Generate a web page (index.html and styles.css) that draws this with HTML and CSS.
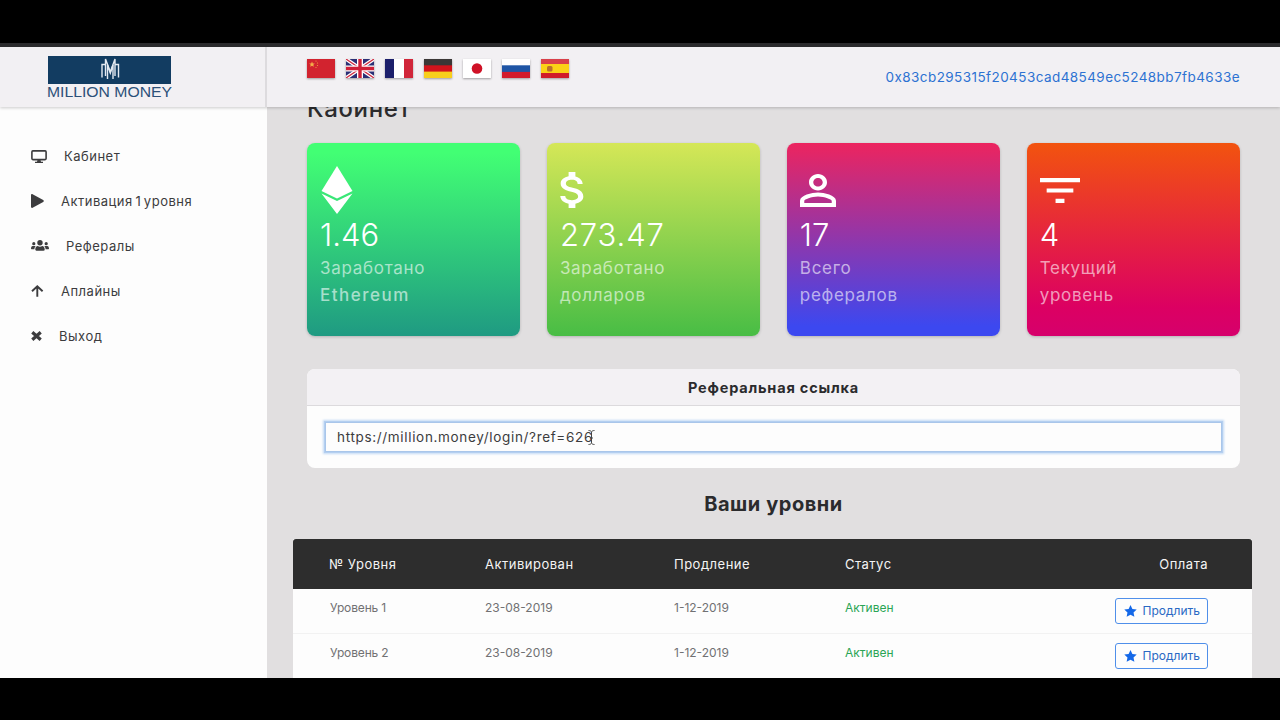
FILE: index.html
```
<!DOCTYPE html>
<html lang="ru">
  <head>
    <meta charset="UTF-8" />
    <meta name="viewport" content="width=device-width, initial-scale=1" />

    <title>Million Money</title>

    <link rel="stylesheet" href="styles.css">
  </head>

  <body>

    <!-- shared icons -->
    <svg class="defs" width="0" height="0">
      <symbol id="star" viewBox="0 0 24 23">
        <path d="M12 0l3.6 7.6 8.3 1.1-6.1 5.7 1.6 8.3L12 18.7l-7.4 4 1.6-8.3L.1 8.7l8.3-1.1z" />
      </symbol>
    </svg>

    <div class="screen">

      <header class="topbar">
        <a class="brand">
          <svg width="126" height="44" viewBox="0 0 126 44">
            <rect x="1" y="1" width="123" height="28" fill="#123c61" />
            <g fill="none" stroke="#e4eaf2" stroke-width="1.400">
              <path d="M55 22.500V9.500h3.500M71.500 22.500V9.500H68" />
              <path d="M58.500 21V4l4.800 13L68 4v17" />
              <path d="M60.500 24V10l2.800 8L66 10v14" />
            </g>
            <text x="0" y="41.500" textLength="125" lengthAdjust="spacingAndGlyphs">MILLION MONEY</text>
          </svg>
        </a>

        <div class="topbar-main">
          <div class="flags">
            <svg class="flag" viewBox="0 0 28 19" preserveAspectRatio="none">
              <rect width="28" height="19" fill="#d2232f" />
              <path d="M5 2.500l.8 1.900 2 .1-1.500 1.300.5 2L5 6.700 3.200 7.800l.5-2L2.200 4.500l2-.1z" fill="#f5b04a" />
              <g fill="#f0a040"><circle cx="9" cy="2" r=".6" /><circle cx="10.500" cy="4" r=".6" /><circle cx="10.500" cy="6.500" r=".6" /><circle cx="9" cy="8.500" r=".6" /></g>
            </svg>
            <svg class="flag" viewBox="0 0 28 19" preserveAspectRatio="none">
              <rect width="28" height="19" fill="#2b2f75" />
              <path d="M0 0l28 19M28 0L0 19" stroke="#fff" stroke-width="3.800" />
              <path d="M0 0l28 19M28 0L0 19" stroke="#cf2b41" stroke-width="1.300" />
              <path d="M14 0v19M0 9.500h28" stroke="#fff" stroke-width="6" />
              <path d="M14 0v19M0 9.500h28" stroke="#cf2038" stroke-width="3.400" />
            </svg>
            <svg class="flag" viewBox="0 0 28 19" preserveAspectRatio="none">
              <rect width="28" height="19" fill="#fff" />
              <rect width="9" height="19" fill="#1c1f6b" />
              <rect x="19" width="9" height="19" fill="#d1263a" />
            </svg>
            <svg class="flag" viewBox="0 0 28 19" preserveAspectRatio="none">
              <rect width="28" height="19" fill="#f8cf1c" />
              <rect width="28" height="12.600" fill="#d2141c" />
              <rect width="28" height="6.300" fill="#3b3736" />
            </svg>
            <svg class="flag" viewBox="0 0 28 19" preserveAspectRatio="none">
              <rect width="28" height="19" fill="#fff" />
              <circle cx="14" cy="9.500" r="5.300" fill="#cf1126" />
            </svg>
            <svg class="flag" viewBox="0 0 28 19" preserveAspectRatio="none">
              <rect width="28" height="19" fill="#fff" />
              <rect y="6.300" width="28" height="12.700" fill="#1f55a5" />
              <rect y="12.900" width="28" height="6.100" fill="#d21a2b" />
            </svg>
            <svg class="flag" viewBox="0 0 28 19" preserveAspectRatio="none">
              <rect width="28" height="19" fill="#fbd116" />
              <rect width="28" height="5" fill="#d9404a" />
              <rect y="14" width="28" height="5" fill="#d01c2a" />
              <rect x="6" y="7" width="5.500" height="5.500" rx="1.500" fill="#b9702c" />
            </svg>
          </div>

          <a class="wallet">0x83cb295315f20453cad48549ec5248bb7fb4633e</a>
        </div>
      </header>

      <div class="page">

        <nav class="sidebar">
          <a class="nav-item">
            <svg width="16" height="13" viewBox="0 0 16 13">
              <rect x=".9" y=".9" width="14.200" height="8.700" rx="1" fill="none" stroke="currentColor" stroke-width="1.600" />
              <path d="M6.500 10h3l.5 1.700h2V13H4v-1.300h2z" fill="currentColor" />
            </svg>
            <span>Кабинет</span>
          </a>
          <a class="nav-item">
            <svg width="13" height="14" viewBox="0 0 13 14">
              <path d="M0 1.200C0 .3.800-.2 1.600.3l10.600 5.600c.8.500.8 1.500 0 2L1.600 13.700C.8 14.200 0 13.700 0 12.800z" fill="currentColor" />
            </svg>
            <span>Активация 1 уровня</span>
          </a>
          <a class="nav-item">
            <svg width="18" height="11" viewBox="0 0 18 11">
              <g fill="currentColor">
                <circle cx="9" cy="2.700" r="2.700" />
                <circle cx="2.800" cy="3.700" r="1.600" />
                <circle cx="15.200" cy="3.700" r="1.600" />
                <path d="M4.300 9.500c0-2.300 1-3.500 2.500-3.500 1.200.9 3.200.9 4.400 0 1.500 0 2.500 1.200 2.500 3.500 0 .8-.4 1.200-1.100 1.200H5.400c-.7 0-1.100-.4-1.100-1.200z" />
                <path d="M0 8.800C0 7 .6 5.900 1.700 5.900h2.200c.3 0 .6.100.8.200C3.800 6.900 3.500 8 3.400 9.200H.6C.2 9.200 0 9.100 0 8.800zM18 8.800c0-1.800-.6-2.900-1.700-2.900h-2.200c-.3 0-.6.100-.8.200.9.800 1.200 1.900 1.300 3.100h2.800c.4 0 .6-.1.600-.4z" />
              </g>
            </svg>
            <span>Рефералы</span>
          </a>
          <a class="nav-item">
            <svg width="13" height="12" viewBox="0 0 13 12">
              <path d="M6.300 11.800V1.500M1 6.300l5.300-5 5.300 5" fill="none" stroke="currentColor" stroke-width="1.900" />
            </svg>
            <span>Аплайны</span>
          </a>
          <a class="nav-item">
            <svg width="11" height="10" viewBox="0 0 11 10">
              <path d="M1.300 1.200l8.400 7.600M9.700 1.200L1.300 8.800" fill="none" stroke="currentColor" stroke-width="3.200" />
            </svg>
            <span>Выход</span>
          </a>
        </nav>

        <main class="content">
          <h1 class="title">Кабинет</h1>

          <div class="cards">
            <div class="card card-eth">
              <div class="card-icon">
                <svg class="eth-icon" width="32" height="48" viewBox="0 0 32 48" fill="#fff">
                  <path d="M16 0l15.500 25L16 32.500.5 25z" />
                  <path d="M.5 27.500L16 35l15.500-7.500L16 48z" />
                </svg>
              </div>
              <div class="card-value">1.46</div>
              <div class="card-label">Заработано<br><b>Ethereum</b></div>
            </div>

            <div class="card card-usd">
              <div class="card-icon">
                <svg width="24" height="36" viewBox="6.200 3 10.600 18" preserveAspectRatio="none" fill="#fff">
                  <path d="M11.800 10.900c-2.270-.59-3-1.200-3-2.150 0-1.090 1.010-1.850 2.700-1.850 1.780 0 2.440.85 2.500 2.100h2.210c-.07-1.720-1.120-3.300-3.210-3.810V3h-3v2.160c-1.940.42-3.500 1.680-3.500 3.610 0 2.310 1.910 3.460 4.700 4.130 2.500.6 3 1.480 3 2.410 0 .69-.49 1.790-2.700 1.790-2.060 0-2.870-.92-2.980-2.100h-2.200c.12 2.190 1.760 3.420 3.680 3.830V21h3v-2.150c1.950-.37 3.500-1.500 3.500-3.550 0-2.840-2.430-3.810-4.700-4.400z" />
                </svg>
              </div>
              <div class="card-value">273.47</div>
              <div class="card-label">Заработано<br>долларов</div>
            </div>

            <div class="card card-ref">
              <div class="card-icon">
                <svg width="36" height="33" viewBox="4 4 16 16" preserveAspectRatio="none" fill="#fff">
                  <path d="M12 5.900c1.160 0 2.100.94 2.100 2.100s-.94 2.100-2.100 2.100S9.900 9.160 9.900 8s.94-2.100 2.100-2.100m0 9c2.970 0 6.100 1.460 6.100 2.100v1.100H5.900V17c0-.64 3.130-2.100 6.100-2.100M12 4C9.790 4 8 5.790 8 8s1.790 4 4 4 4-1.790 4-4-1.790-4-4-4zm0 9c-2.670 0-8 1.340-8 4v3h16v-3c0-2.660-5.330-4-8-4z" />
                </svg>
              </div>
              <div class="card-value">17</div>
              <div class="card-label">Всего<br>рефералов</div>
            </div>

            <div class="card card-level">
              <div class="card-icon">
                <svg width="40" height="25" viewBox="3 6 18 12" preserveAspectRatio="none" fill="#fff">
                  <path d="M10 18h4v-2h-4v2zM3 6v2h18V6H3zm3 7h12v-2H6v2z" />
                </svg>
              </div>
              <div class="card-value">4</div>
              <div class="card-label">Текущий<br>уровень</div>
            </div>
          </div>

          <section class="ref-box">
            <h2 class="ref-head">Реферальная ссылка</h2>
            <div class="ref-body">
              <input class="ref-input" type="text" value="https://million.money/login/?ref=626" />
              <svg class="caret" width="7" height="15" viewBox="0 0 7 15">
                <path d="M.5.500c1.500 0 3 .5 3 2v10c0 1.500-1.500 2-3 2M6.500.500c-1.500 0-3 .5-3 2v10c0 1.500 1.500 2 3 2M2 8h3" fill="none" stroke="#444" />
              </svg>
            </div>
          </section>

          <h2 class="levels-title">Ваши уровни</h2>

          <table class="levels">
            <thead>
              <tr>
                <th class="col-level">№ Уровня</th>
                <th class="col-start">Активирован</th>
                <th class="col-end">Продление</th>
                <th class="col-status">Статус</th>
                <th class="col-pay">Оплата</th>
              </tr>
            </thead>
            <tbody>
              <tr>
                <td class="col-level">Уровень 1</td>
                <td>23-08-2019</td>
                <td>1-12-2019</td>
                <td class="active">Активен</td>
                <td class="col-pay"><button class="btn"><svg width="13" height="12"><use href="#star" /></svg>Продлить</button></td>
              </tr>
              <tr>
                <td class="col-level">Уровень 2</td>
                <td>23-08-2019</td>
                <td>1-12-2019</td>
                <td class="active">Активен</td>
                <td class="col-pay"><button class="btn"><svg width="13" height="12"><use href="#star" /></svg>Продлить</button></td>
              </tr>
            </tbody>
          </table>
        </main>

      </div>
    </div>
  </body>
</html>
```

FILE: styles.css
```
*{
  box-sizing: border-box;
}

body{
  margin: 0;
  padding-top: 43px;
  height: 720px;
  overflow: hidden;
  background: #000000;
  font-family: Inter, "Liberation Sans", sans-serif;
  color: #3c3c3e;
}

.defs{
  display: block;
}

.screen{
  display: flex;
  flex-direction: column;
  height: 635px;
  overflow: hidden;
  border-top: 4px solid #2b2b2d;
  background: #e1dfe0;
}

/* top bar */

.topbar{
  position: relative;
  z-index: 1;
  display: flex;
  flex: none;
  height: 60px;
  background: #f2f0f3;
  box-shadow: 0 1px 3px rgba(0, 0, 0, .2);
}

.brand{
  width: 267px;
  padding: 8px 0 0 47px;
  border-right: 2px solid #dddbde;
}

.brand text{
  font-family: "Liberation Sans", sans-serif;
  font-size: 15.5px;
  fill: #2c5079;
}

.topbar-main{
  flex: 1;
  display: flex;
  justify-content: space-between;
  padding: 12px 40px 0;
}

.flags{
  display: flex;
  gap: 11px;
}

.flag{
  width: 28px;
  height: 19px;
  box-shadow: 0 1px 2px rgba(0, 0, 0, .35);
}

.wallet{
  padding-top: 9px;
  font-size: 13.5px;
  line-height: 18px;
  letter-spacing: .43px;
  color: #2d72d2;
}

/* layout */

.page{
  flex: 1;
  display: flex;
  min-height: 0;
}

.sidebar{
  flex: none;
  width: 267px;
  padding: 27px 0 0 31px;
  background: #fdfdfd;
}

.nav-item{
  display: flex;
  align-items: center;
  gap: 17px;
  height: 44.8px;
  font-size: 13px;
  letter-spacing: .5px;
  word-spacing: -1.5px;
}

.content{
  flex: 1;
  min-width: 0;
  padding: 0 40px;
}

.title{
  margin: -12px 0 20px;
  font-size: 24px;
  font-weight: 500;
  line-height: 28px;
  letter-spacing: .7px;
  color: #2b2b2d;
}

/* cards */

.cards{
  display: grid;
  grid-template-columns: repeat(4, 1fr);
  gap: 26.670px;
}

.card{
  height: 193px;
  padding: 23px 13px 0;
  border-radius: 8px;
  color: #ffffff;
  box-shadow: 0 1px 3px rgba(0, 0, 0, .2);
}

.card-eth{
  background: linear-gradient(#42ff74 5%, #1f9a82);
}

.card-usd{
  background: linear-gradient(#d5e757, #48bd45);
}

.card-ref{
  background: linear-gradient(#ec245f, #3c48f0 95%);
}

.card-level{
  background: linear-gradient(#f2530f, #dc0062 85%, #d6006c);
}

.card-icon{
  display: flex;
  align-items: center;
  height: 48px;
}

.eth-icon{
  margin-left: 1px;
}

.card-value{
  margin-top: 3px;
  font-size: 31px;
  font-weight: 300;
  line-height: 36px;
}

.card-usd .card-value{
  letter-spacing: .9px;
}

.card-label{
  margin-top: 2px;
  font-size: 17px;
  line-height: 27px;
  letter-spacing: .7px;
  color: rgba(255, 255, 255, .6);
}

.card-label b{
  font-weight: 500;
  letter-spacing: 1.5px;
}

/* referral link */

.ref-box{
  margin-top: 33px;
  border-radius: 8px;
  background: #fdfdfd;
  overflow: hidden;
}

.ref-head{
  margin: 0;
  height: 37px;
  border-bottom: 1px solid #dcdadd;
  background: #f3f1f4;
  font-size: 14.5px;
  font-weight: 700;
  line-height: 37px;
  letter-spacing: .8px;
  text-align: center;
  color: #2b2b2d;
}

.ref-body{
  position: relative;
  padding: 16px 18px;
}

.ref-input{
  display: block;
  width: 100%;
  height: 30px;
  padding: 0 11px 1px;
  border: 1px solid #a9c6ea;
  outline: none;
  background: #fdfdfd;
  box-shadow: 0 0 0 1px #b4cff0, 0 0 2px 2px #c3daf5;
  font-family: inherit;
  font-size: 13.500px;
  letter-spacing: .67px;
  color: #3c3c3e;
}

.caret{
  position: absolute;
  left: 281px;
  top: 24px;
}

/* levels table */

.levels-title{
  margin: 23px 0 22px;
  font-size: 20px;
  font-weight: 700;
  line-height: 26px;
  letter-spacing: .55px;
  text-align: center;
  color: #2b2b2d;
}

.levels{
  width: 959px;
  margin-left: -14px;
  border-collapse: collapse;
  table-layout: fixed;
  background: #fdfdfd;
}

.levels th{
  height: 50px;
  padding: 0 0 1px;
  background: #2d2d2d;
  font-size: 13px;
  font-weight: 400;
  letter-spacing: .5px;
  text-align: left;
  color: #f4f4f4;
}

.levels th:first-child{
  border-top-left-radius: 3px;
}

.levels th:last-child{
  border-top-right-radius: 3px;
}

.levels td{
  height: 44.8px;
  padding: 10px 0 0;
  border-bottom: 1px solid #f2f2f2;
  font-size: 12px;
  line-height: 18px;
  vertical-align: top;
  color: #717173;
}

.levels .col-level{
  width: 192px;
  padding-left: 36px;
}

.levels td.col-level{
  padding-left: 37px;
  letter-spacing: -.15px;
}

.levels .col-start{
  width: 189px;
}

.levels .col-end{
  width: 171px;
}

.levels .col-status{
  width: 150px;
}

.levels .col-pay{
  padding-right: 44px;
  text-align: right;
}

.levels td.col-pay{
  padding-top: 9px;
}

.levels .active{
  color: #2ba555;
}

.btn{
  display: inline-flex;
  align-items: center;
  gap: 6px;
  height: 26px;
  padding: 0 7px 1px 8px;
  border: 1px solid #4f8fea;
  border-radius: 3px;
  background: #fdfdfd;
  font-family: inherit;
  font-size: 12px;
  color: #2a69c4;
}

.btn svg{
  fill: #1468e8;
}
```
